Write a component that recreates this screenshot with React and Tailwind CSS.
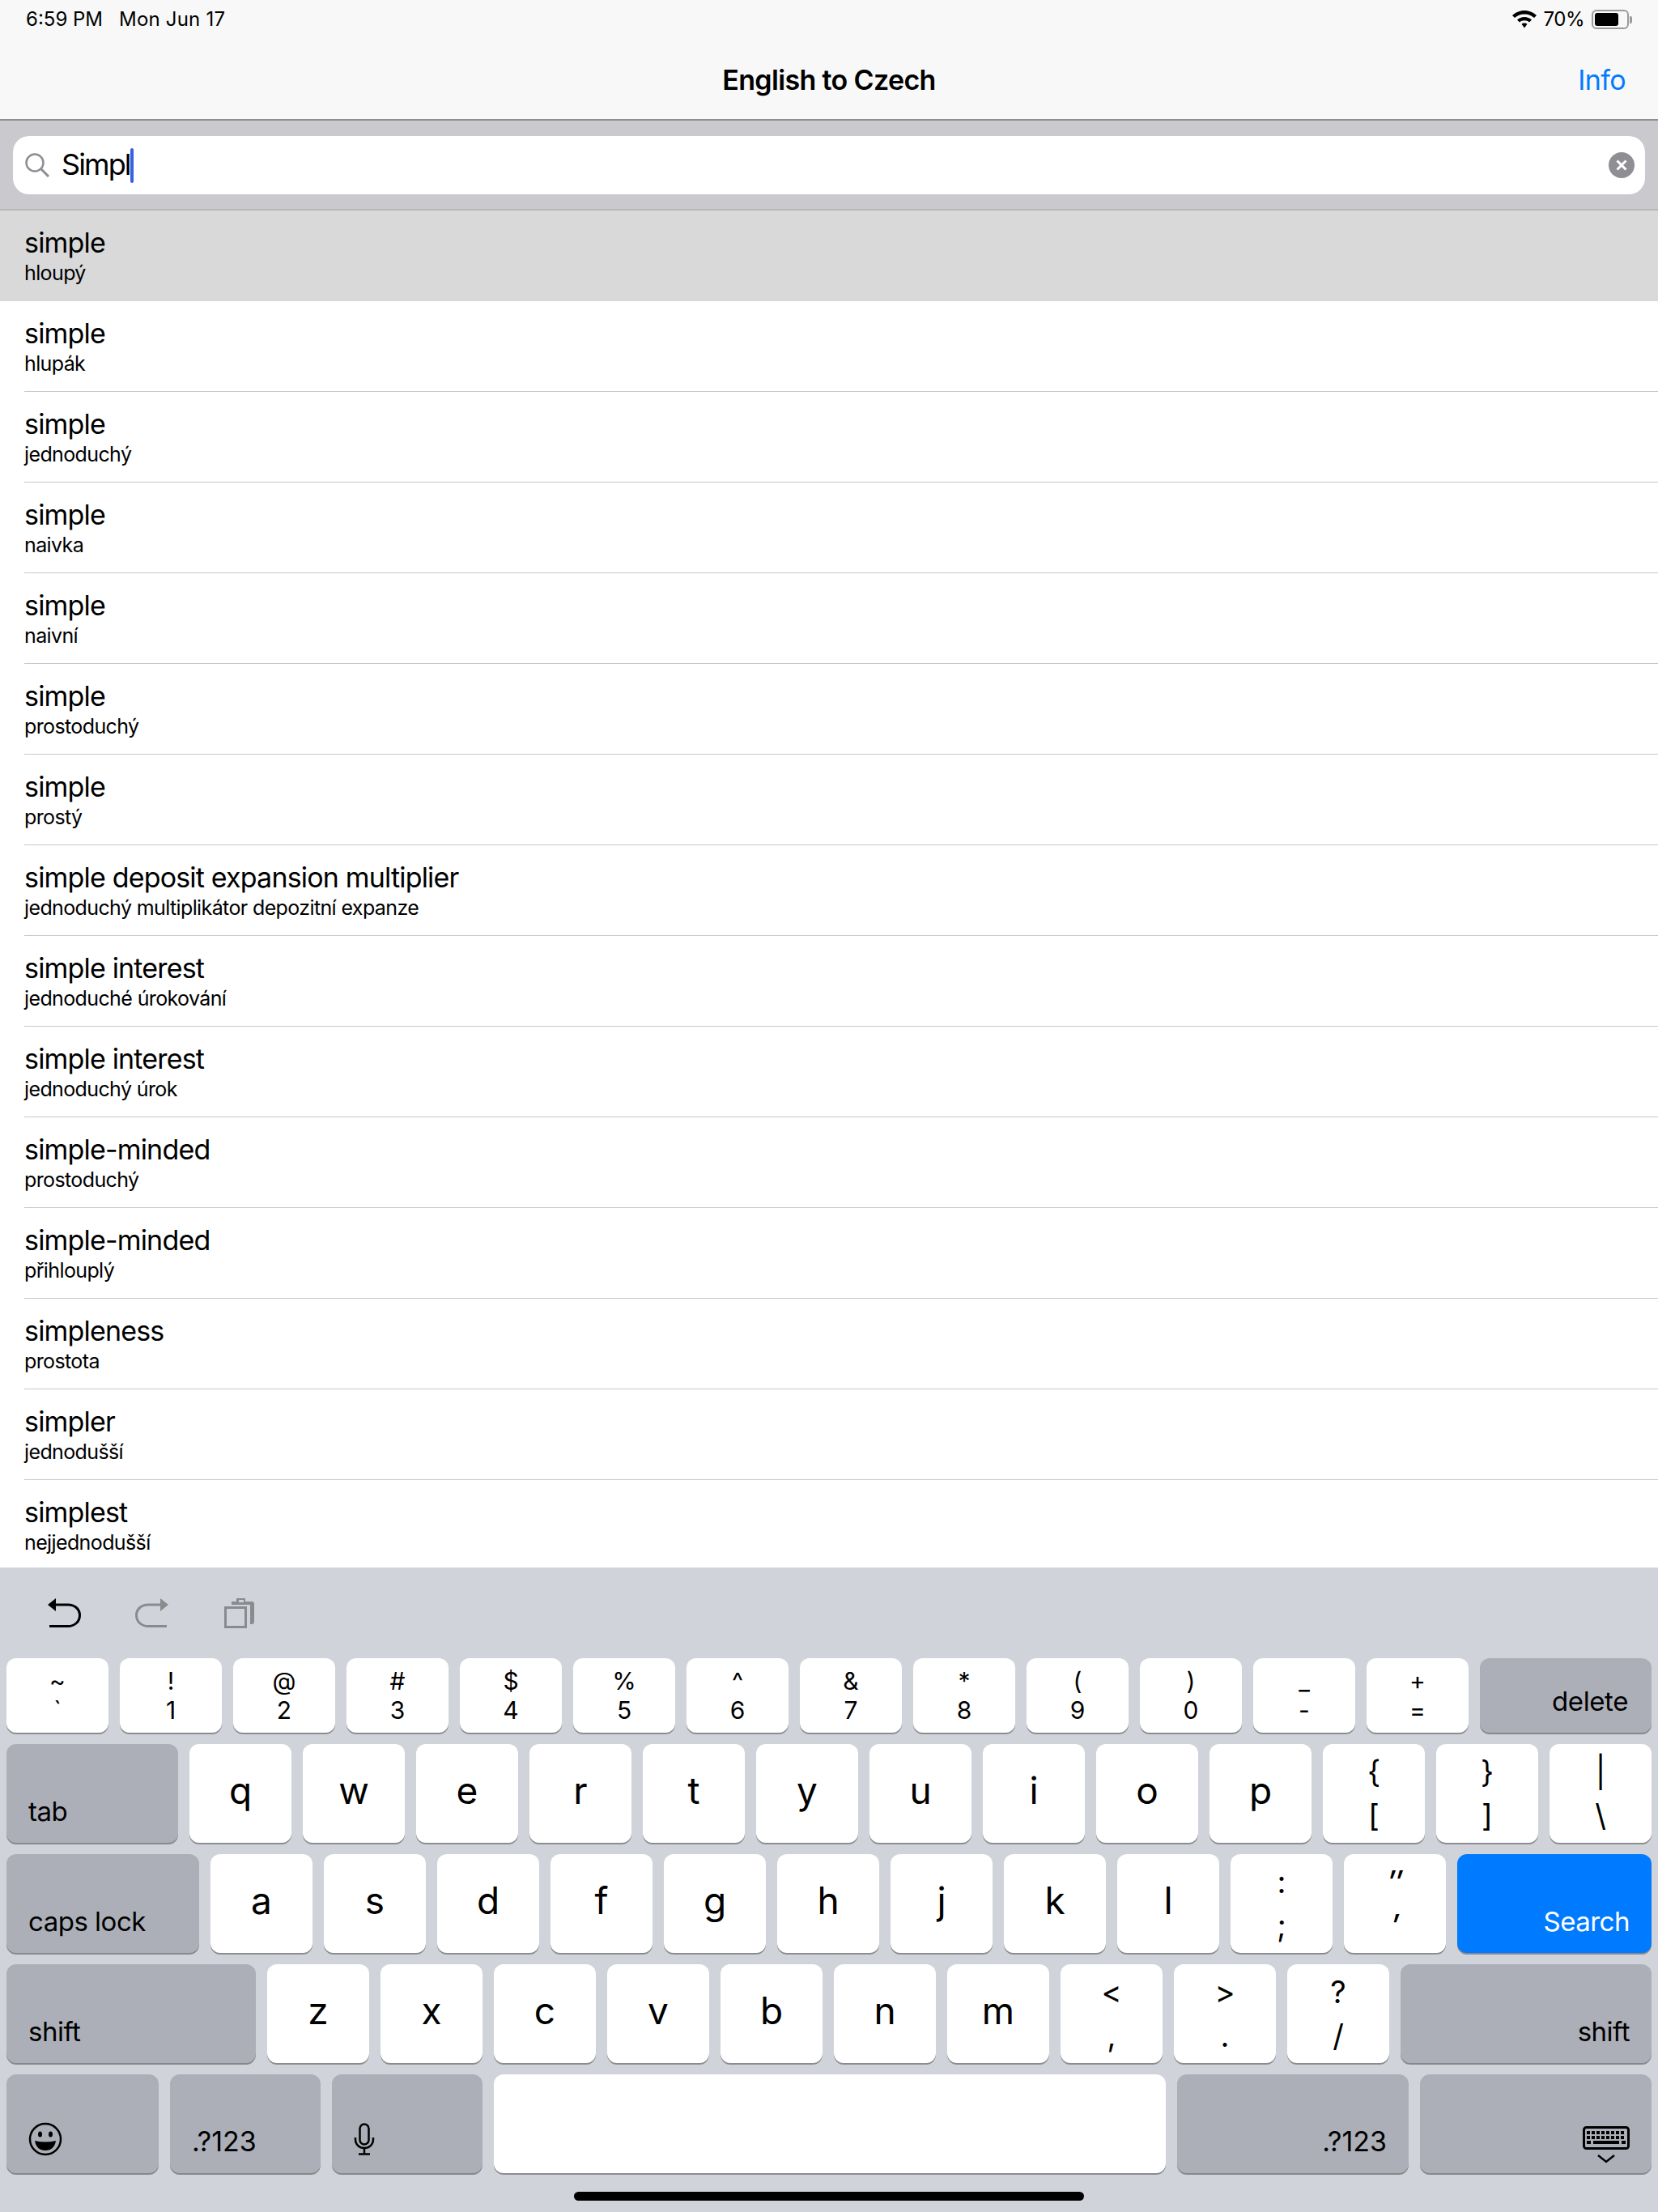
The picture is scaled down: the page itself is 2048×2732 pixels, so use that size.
import React from 'react';

const rows = [
  ['simple', 'hloupý'],
  ['simple', 'hlupák'],
  ['simple', 'jednoduchý'],
  ['simple', 'naivka'],
  ['simple', 'naivní'],
  ['simple', 'prostoduchý'],
  ['simple', 'prostý'],
  ['simple deposit expansion multiplier', 'jednoduchý multiplikátor depozitní expanze'],
  ['simple interest', 'jednoduché úrokování'],
  ['simple interest', 'jednoduchý úrok'],
  ['simple-minded', 'prostoduchý'],
  ['simple-minded', 'přihlouplý'],
  ['simpleness', 'prostota'],
  ['simpler', 'jednodušší'],
  ['simplest', 'nejjednodušší'],
];

const numberRow = [
  ['~', '`'], ['!', '1'], ['@', '2'], ['#', '3'], ['$', '4'], ['%', '5'], ['^', '6'],
  ['&', '7'], ['*', '8'], ['(', '9'], [')', '0'], ['_', '-'], ['+', '='],
];

function Letter({ ch }) {
  return (
    <div className="w-[126px] h-[122px] bg-white rounded-[12px] shadow-[0_2px_0_#8b8c90] flex items-center justify-center text-[46px] leading-none text-black">
      <span className="-mt-[8px]">{ch}</span>
    </div>
  );
}

function Dual({ top, bottom, slanted }) {
  return (
    <div className={`w-[126px] h-[122px] bg-white rounded-[12px] shadow-[0_2px_0_#8b8c90] flex flex-col items-center justify-center gap-[10px] text-[38px] leading-[44px] text-black ${slanted ? 'italic font-medium' : ''}`}>
      <span>{top}</span>
      <span>{bottom}</span>
    </div>
  );
}

function NumKey({ top, bottom }) {
  return (
    <div className="w-[126px] h-[92px] bg-white rounded-[12px] shadow-[0_2px_0_#8b8c90] flex flex-col items-center justify-center text-[30px] leading-[36px] text-black">
      <span>{top}</span>
      <span>{bottom}</span>
    </div>
  );
}

function GrayKey({ label, width, right, children }) {
  return (
    <div className={`${width} h-[122px] bg-[#acafb8] rounded-[12px] shadow-[0_2px_0_#87888d] flex items-end text-[33px] tracking-[-0.5px] leading-none text-black pb-[22px] px-[27px] ${right ? 'justify-end' : 'justify-start'}`}>
      {label}
      {children}
    </div>
  );
}

function UndoIcon() {
  return (
    <svg width="42" height="38" viewBox="0 0 42 38" fill="none">
      <path d="M0 9 L10 1 V17 Z" fill="#000" />
      <path d="M8 9 H25 C33 9 39.5 14 39.5 22 C39.5 30 33 35.5 25 35.5 H2" stroke="#000" strokeWidth="3" />
    </svg>
  );
}

function RedoIcon() {
  return (
    <svg width="42" height="38" viewBox="0 0 42 38" fill="none">
      <path d="M42 9 L32 1 V17 Z" fill="#8a8b8e" />
      <path d="M34 9 H17 C9 9 2.5 14 2.5 22 C2.5 30 9 35.5 17 35.5 H40" stroke="#8a8b8e" strokeWidth="3" />
    </svg>
  );
}

function PasteIcon() {
  return (
    <svg width="37" height="38" viewBox="0 0 37 38" fill="none">
      <path d="M9 5 H15 V1 H26 V5 H34 Q37 5 37 8 V30 Q37 33 34 33 H32 V9 H9 Z" fill="#8a8b8e" />
      <rect x="18" y="3" width="6" height="3" fill="#d0d4da" />
      <rect x="1.5" y="12.5" width="25" height="24" stroke="#8a8b8e" strokeWidth="3" />
    </svg>
  );
}

function KeyboardIcon() {
  const dots = [];
  for (let y = 6; y <= 13; y += 6) {
    for (let x = 5; x <= 50; x += 6) {
      dots.push(<rect key={`${x}-${y}`} x={x} y={y} width="4" height="4" fill="#000" />);
    }
  }
  return (
    <svg width="58" height="46" viewBox="0 0 58 46" fill="none">
      <rect x="1.5" y="1.5" width="55" height="26" rx="3" stroke="#000" strokeWidth="3" />
      {dots}
      <rect x="5" y="18" width="5" height="4" fill="#000" />
      <rect x="13" y="18" width="32" height="4" fill="#000" />
      <rect x="48" y="18" width="5" height="4" fill="#000" />
      <path d="M19 36 L29 44 L39 36" stroke="#000" strokeWidth="2.5" />
    </svg>
  );
}

export default function App() {
  return (
    <div className="w-[2048px] h-[2732px] overflow-hidden flex flex-col bg-white text-black font-['Inter',sans-serif]">
      {/* status + nav */}
      <div className="h-[149px] shrink-0 bg-[#f8f8f8] border-b-2 border-[#8e8e8e] px-[32px] flex flex-col">
        <div className="h-[48px] flex items-center justify-between text-[24px]">
          <div className="flex gap-[20px]">
            <span>6:59 PM</span>
            <span className="tracking-[0.2px]">Mon Jun 17</span>
          </div>
          <div className="flex items-center gap-[9px]">
            <svg width="30" height="22" viewBox="0 0 30 22" fill="#000">
              <path d="M15 0 C9 0 4 2.5 0 6 L3 9 C6 6.500 10 4.500 15 4.500 C20 4.500 24 6.500 27 9 L30 6 C26 2.500 21 0 15 0 Z" />
              <path d="M15 8 C11.500 8 8.500 9.300 6 11.500 L9 14.500 C10.500 13.200 12.500 12.300 15 12.300 C17.500 12.300 19.500 13.200 21 14.500 L24 11.500 C21.500 9.300 18.500 8 15 8 Z" />
              <path d="M15 15.500 C13.500 15.500 12.500 16 11.500 16.800 L15 21.500 L18.500 16.800 C17.500 16 16.500 15.500 15 15.500 Z" />
            </svg>
            <span className="tracking-[-0.5px]">70%</span>
            <div className="flex items-center">
              <div className="w-[46px] h-[24px] rounded-[6px] border-2 border-[#9a9a9a] p-[2px]">
                <div className="w-[29px] h-full rounded-[3px] bg-black" />
              </div>
              <div className="w-[3px] h-[9px] rounded-r-[2px] bg-[#9a9a9a] ml-[1px]" />
            </div>
          </div>
        </div>
        <div className="relative flex-1 flex items-center justify-center">
          <span className="text-[34px] font-semibold tracking-[-0.65px] mt-[2px]">English to Czech</span>
          <span className="absolute right-[8px] top-[25px] text-[34px] text-[#007aff] tracking-[-0.6px]">Info</span>
        </div>
      </div>

      {/* search */}
      <div className="h-[111px] shrink-0 bg-[#c9c9ce] border-b-2 border-[#b7b7bb] px-[16px] pt-[19px]">
        <div className="h-[72px] bg-white rounded-[20px] flex items-center pl-[15px] pr-[13px]">
          <svg width="31" height="30" viewBox="0 0 31 30" fill="none" stroke="#8e8e93" strokeWidth="2.5">
            <circle cx="12" cy="12" r="10.500" />
            <path d="M20 20 L29 29" strokeWidth="3" />
          </svg>
          <span className="ml-[14px] text-[36px] tracking-[-1.9px] leading-none -mt-[3px]">Simpl</span>
          <div className="w-[4px] h-[43px] bg-[#3a5fe0] rounded-[2px]" />
          <div className="ml-auto w-[32px] h-[32px] rounded-full bg-[#8e8e93] flex items-center justify-center">
            <svg width="16" height="16" viewBox="0 0 16 16" stroke="#fff" strokeWidth="3">
              <path d="M2.500 2.500 L13.500 13.500 M13.500 2.500 L2.500 13.500" />
            </svg>
          </div>
        </div>
      </div>

      {/* results */}
      <div className="flex-1 overflow-hidden">
        {rows.map(([word, translation], i) =>
          i === 0 ? (
            <div key={i} className="h-[112px] bg-[#d9d9d9] pl-[30px] flex flex-col justify-center">
              <div className="text-[34px] leading-[40px] tracking-[-0.82px]">{word}</div>
              <div className="text-[25px] leading-[30px] mt-[2px] tracking-[-0.62px]">{translation}</div>
            </div>
          ) : (
            <div key={i} className="h-[112px] ml-[30px] border-b border-[#c8c7cc] flex flex-col justify-center">
              <div className="text-[34px] leading-[40px] tracking-[-0.82px]">{word}</div>
              <div className="text-[25px] leading-[30px] mt-[2px] tracking-[-0.62px]">{translation}</div>
            </div>
          )
        )}
      </div>

      {/* keyboard */}
      <div className="h-[796px] shrink-0 bg-[#d0d4da] flex flex-col px-[8px]">
        <div className="h-[112px] shrink-0 flex items-start pt-[37px] pl-[51px] gap-[65px]">
          <UndoIcon />
          <RedoIcon />
          <div className="ml-[4px]"><PasteIcon /></div>
        </div>
        <div className="flex flex-col gap-[14px]">
          <div className="flex gap-[14px]">
            {numberRow.map(([a, b]) => <NumKey key={a} top={a} bottom={b} />)}
            <div className="w-[212px] h-[92px] bg-[#acafb8] rounded-[12px] shadow-[0_2px_0_#87888d] flex items-end justify-end text-[33px] tracking-[-0.4px] leading-none pb-[22px] pr-[29px]">delete</div>
          </div>
          <div className="flex gap-[14px]">
            <GrayKey label="tab" width="w-[212px]" />
            {'qwertyuiop'.split('').map((c) => <Letter key={c} ch={c} />)}
            <Dual top="{" bottom="[" />
            <Dual top="}" bottom="]" />
            <Dual top="|" bottom="\" />
          </div>
          <div className="flex gap-[14px]">
            <GrayKey label="caps lock" width="w-[238px]" />
            {'asdfghjkl'.split('').map((c) => <Letter key={c} ch={c} />)}
            <Dual top=":" bottom=";" />
            <Dual top="″" bottom="′" slanted />
            <div className="w-[240px] h-[122px] bg-[#007aff] rounded-[12px] shadow-[0_2px_0_#87888d] flex items-end justify-end text-[33px] tracking-[-0.5px] leading-none text-white pb-[22px] pr-[27px]">Search</div>
          </div>
          <div className="flex gap-[14px]">
            <GrayKey label="shift" width="w-[308px]" />
            {'zxcvbnm'.split('').map((c) => <Letter key={c} ch={c} />)}
            <Dual top="<" bottom="," />
            <Dual top=">" bottom="." />
            <Dual top="?" bottom="/" />
            <GrayKey label="shift" width="w-[310px]" right />
          </div>
          <div className="flex gap-[14px]">
            <GrayKey width="w-[188px]">
              <svg width="42" height="42" viewBox="0 0 42 42" fill="none" className="-mb-[1px]">
                <circle cx="21" cy="21" r="19" stroke="#000" strokeWidth="2.500" />
                <ellipse cx="14.500" cy="15" rx="2.500" ry="3.500" fill="#000" />
                <ellipse cx="27.500" cy="15" rx="2.500" ry="3.500" fill="#000" />
                <path d="M8 23 Q21 26 34 23 Q32 35 21 35 Q10 35 8 23 Z" fill="#000" />
              </svg>
            </GrayKey>
            <GrayKey width="w-[186px]"><span className="text-[34px] tracking-[0px]">.?123</span></GrayKey>
            <GrayKey width="w-[186px]">
              <svg width="26" height="40" viewBox="0 0 26 40" fill="none" stroke="#000" strokeWidth="2.500">
                <rect x="7.500" y="1.500" width="11" height="25" rx="5.500" />
                <path d="M2 18 V20 C2 27 7 31 13 31 C19 31 24 27 24 20 V18" />
                <path d="M13 31 V38 M6 38.500 H20" />
              </svg>
            </GrayKey>
            <div className="w-[830px] h-[122px] bg-white rounded-[12px] shadow-[0_2px_0_#8b8c90]" />
            <GrayKey width="w-[286px]" right><span className="text-[34px] tracking-[0px]">.?123</span></GrayKey>
            <GrayKey width="w-[286px]" right>
              <div className="-mb-[10px]"><KeyboardIcon /></div>
            </GrayKey>
          </div>
        </div>
        <div className="mt-[23px] w-[630px] h-[11px] rounded-full bg-black self-center shrink-0" />
      </div>
    </div>
  );
}
